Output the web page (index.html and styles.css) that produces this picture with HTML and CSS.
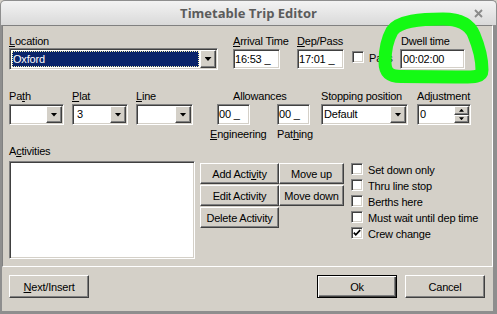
FILE: index.html
```html
<!DOCTYPE html>
<html lang="en">
<head>
    <meta charset="UTF-8">
    <meta name="viewport" content="width=device-width, initial-scale=1.0">
    <title>Timetable Trip Editor</title>
    <link rel="stylesheet" href="styles.css">
</head>
<body>
<div class="window">
    <!-- Title bar -->
    <div class="titlebar">
        <span></span>
        <span class="title">Timetable Trip Editor</span>
        <span class="wm-buttons">
            <svg width="8" height="9" viewBox="0 0 8 9"><path d="M0.5 6.5h7" stroke="#8a8a8a" stroke-width="2"/></svg>
            <svg width="9" height="9" viewBox="0 0 9 9"><path d="M1 1l7 7M8 1l-7 7" stroke="#8a8a8a" stroke-width="1.9"/></svg>
        </span>
    </div>

    <div class="client">
        <div class="panel">
            <!-- Location and times -->
            <div class="row row-1">
                <div class="group g-location">
                    <label><u>L</u>ocation</label>
                    <div class="combo sunken c-location">
                        <div class="combo-text"><span class="selected">Oxford</span></div>
                        <div class="combo-btn raised"><span class="arrow-down"></span></div>
                    </div>
                </div>
                <div class="group g-arrival">
                    <label><u>A</u>rrival Time</label>
                    <div class="edit sunken e-time">16:53 _</div>
                </div>
                <div class="group g-dep">
                    <label><u>D</u>ep/Pass</label>
                    <div class="edit sunken e-time">17:01 _</div>
                </div>
                <div class="group g-pass">
                    <span class="cb sunken"></span>
                    <span class="cb-label">Pass</span>
                </div>
                <div class="group g-dwell">
                    <label>Dwell time</label>
                    <div class="edit sunken e-dwell">00:02:00</div>
                </div>
            </div>

            <!-- Path, platform, allowances -->
            <div class="row row-2">
                <div class="group g-path">
                    <label>Pa<u>t</u>h</label>
                    <div class="combo sunken c-small c-path">
                        <div class="combo-text"></div>
                        <div class="combo-btn raised"><span class="arrow-down"></span></div>
                    </div>
                </div>
                <div class="group g-plat">
                    <label><u>P</u>lat</label>
                    <div class="combo sunken c-small c-plat">
                        <div class="combo-text">3</div>
                        <div class="combo-btn raised"><span class="arrow-down"></span></div>
                    </div>
                </div>
                <div class="group g-line">
                    <label><u>L</u>ine</label>
                    <div class="combo sunken c-small c-line">
                        <div class="combo-text"></div>
                        <div class="combo-btn raised"><span class="arrow-down"></span></div>
                    </div>
                </div>
                <div class="group g-allow">
                    <label class="allow-title">Allowances</label>
                    <div class="allow-inputs">
                        <div class="edit sunken e-allow">00 _</div>
                        <div class="edit sunken e-allow">00 _</div>
                    </div>
                    <div class="allow-labels">
                        <span class="sub-eng"><u>E</u>ngineering</span>
                        <span>Pat<u>h</u>ing</span>
                    </div>
                </div>
                <div class="group g-stop">
                    <label>Stopping position</label>
                    <div class="combo sunken c-small c-stop">
                        <div class="combo-text">Default</div>
                        <div class="combo-btn raised"><span class="arrow-down"></span></div>
                    </div>
                </div>
                <div class="group g-adj">
                    <label>Adjustment</label>
                    <div class="spin sunken">
                        <div class="spin-text">0</div>
                        <div class="spin-btns">
                            <div class="raised"><span class="arrow-up"></span></div>
                            <div class="raised"><span class="arrow-down small"></span></div>
                        </div>
                    </div>
                </div>
            </div>

            <!-- Activities -->
            <div class="row row-3">
                <div class="group g-activities">
                    <label>A<u>c</u>tivities</label>
                    <div class="listbox sunken"></div>
                </div>
                <div class="act-buttons">
                    <div class="btn raised">Add Acti<u>v</u>ity</div>
                    <div class="btn raised">Move up</div>
                    <div class="btn raised">Edit Activity</div>
                    <div class="btn raised">Move down</div>
                    <div class="btn raised">Delete Activity</div>
                </div>
                <div class="checks">
                    <div class="check"><span class="cb sunken"></span><span class="cb-label">Set down only</span></div>
                    <div class="check"><span class="cb sunken"></span><span class="cb-label">Thru line stop</span></div>
                    <div class="check"><span class="cb sunken"></span><span class="cb-label">Berths here</span></div>
                    <div class="check"><span class="cb sunken"></span><span class="cb-label">Must wait until dep time</span></div>
                    <div class="check">
                        <span class="cb sunken"><svg width="8" height="8" viewBox="0 0 8 8"><path d="M0.8 3.6l2 2.2 4.4-4.6" fill="none" stroke="#000" stroke-width="1.7"/></svg></span>
                        <span class="cb-label">Crew change</span>
                    </div>
                </div>
            </div>
        </div>

        <!-- Dialog buttons -->
        <div class="footer">
            <div class="btn raised"><span><u>N</u>ext/Insert</span></div>
            <div class="btn btn-default">Ok</div>
            <div class="btn raised">Cancel</div>
        </div>
    </div>

    <!-- Hand-drawn highlight over the dwell time -->
    <svg class="scribble" width="497" height="314" viewBox="0 0 497 314">
        <path d="M392 31C399 21 421 19 443 19C461 19 470 25 474 35C479 47 482 61 482 70C482 78 472 77 456 77L401 76.5C389 76.5 385 72 385 62C385 50 387 40 392 31Z"
              fill="none" stroke="#14fa14" stroke-width="13" stroke-linejoin="round"/>
    </svg>
</div>
</body>
</html>
```

FILE: styles.css
```css
* {
    box-sizing: border-box;
}

body {
    margin: 0;
    background: #fff;
    font-family: "Liberation Sans", Arial, sans-serif;
    font-size: 11px;
    line-height: 13px;
    letter-spacing: -0.2px;
    color: #000;
}

.window {
    position: relative;
    width: 497px;
    height: 314px;
    display: flex;
    flex-direction: column;
    background: #d4d0c8;
}

/* Title bar */
.titlebar {
    height: 25px;
    display: grid;
    grid-template-columns: 1fr auto 1fr;
    align-items: center;
    background: linear-gradient(#f3f3f3, #d9d9d9);
    border: 1px solid #8e8e8e;
    border-bottom: none;
    border-radius: 5px 5px 0 0;
}

.title {
    font-family: "Open Sans", sans-serif;
    font-weight: 700;
    font-size: 13px;
    letter-spacing: 0;
    color: #5b5b5b;
}

.wm-buttons {
    justify-self: end;
    display: flex;
    align-items: center;
    gap: 15px;
    padding-right: 13px;
}

.wm-buttons svg {
    display: block;
}

/* Client area */
.client {
    flex: 1;
    display: flex;
    flex-direction: column;
    border-left: 2px solid #8e8e8e;
    border-right: 4px solid #8e8e8e;
    border-bottom: 3px solid #8e8e8e;
}

.panel {
    height: 242px;
    border: 1px solid;
    border-color: #808080 #fff #fff #808080;
    padding: 9px 0 0 6px;
}

/* 3D borders */
.sunken {
    background: #fff;
    border: 1px solid;
    border-color: #808080 #fff #fff #808080;
    box-shadow: inset 1px 1px 0 #404040, inset -1px -1px 0 #d4d0c8;
    padding: 1px;
}

.raised {
    background: #d4d0c8;
    border: 1px solid;
    border-color: #fff #404040 #404040 #fff;
    box-shadow: inset -1px -1px 0 #808080;
}

/* Layout rows */
.row {
    display: flex;
    align-items: flex-start;
}

.group {
    display: flex;
    flex-direction: column;
    flex-shrink: 0;
}

.group label {
    display: block;
    height: 13px;
    white-space: nowrap;
}

.row-2 {
    margin-top: 20px;
}

.row-3 {
    margin-top: 4px;
}

/* Row 1 */
.g-location { width: 224px; }
.g-arrival { width: 64px; }
.g-dep { width: 55px; }
.g-dwell label { padding-left: 1px; }

.g-pass {
    width: 48px;
    flex-direction: row;
    padding-top: 16px;
}

/* Combo boxes */
.combo {
    display: flex;
    height: 22px;
}

.combo-text {
    flex: 1;
    padding-left: 2px;
    line-height: 17px;
    white-space: nowrap;
    overflow: hidden;
}

.combo-btn {
    width: 16px;
    display: flex;
    align-items: center;
    justify-content: center;
}

.c-location { width: 209px; }

.c-location .combo-text {
    padding-left: 0;
    line-height: 16px;
}

.selected {
    display: block;
    margin: 1px 1px 1px 1px;
    padding-left: 1px;
    background: #0a246a;
    color: #fff;
    outline: 1px dotted #f4f0b0;
    outline-offset: -1px;
}

.c-small {
    height: 21px;
    margin-top: 1px;
}

.c-path { width: 55px; }
.c-plat { width: 56px; }
.c-plat .combo-text { padding-left: 3px; }
.c-line { width: 57px; }
.c-stop { width: 87px; }
.c-stop .combo-text { padding-left: 1px; }

.arrow-down {
    width: 7px;
    height: 4px;
    background: #000;
    clip-path: polygon(0 0, 100% 0, 50% 100%);
}

.arrow-down.small,
.arrow-up {
    width: 5px;
    height: 3px;
}

.arrow-up {
    background: #000;
    clip-path: polygon(50% 0, 100% 100%, 0 100%);
}

/* Edit fields */
.edit {
    height: 20px;
    margin-top: 1px;
    line-height: 16px;
    white-space: nowrap;
}

.e-time { width: 47px; }

.e-dwell {
    width: 65px;
    padding-left: 2px;
}

/* Row 2 */
.g-path { width: 63px; }
.g-plat { width: 64px; }
.g-line { width: 81px; }
.g-allow { width: 104px; }
.g-stop { width: 96px; }

.allow-title {
    padding-left: 16px;
}

.allow-inputs {
    display: flex;
    gap: 27px;
    margin-top: 1px;
}

.e-allow {
    width: 33px;
    height: 21px;
    margin-top: 0;
    line-height: 17px;
}

.allow-labels {
    display: flex;
    margin-top: 3px;
    white-space: nowrap;
}

.sub-eng {
    margin-left: -7px;
    width: 67px;
}

.spin {
    display: flex;
    width: 54px;
    height: 21px;
    margin-top: 1px;
}

.spin-text {
    flex: 1;
    line-height: 17px;
    padding-left: 1px;
}

.spin-btns {
    width: 15px;
    display: flex;
    flex-direction: column;
}

.spin-btns .raised {
    flex: 1;
    display: flex;
    align-items: center;
    justify-content: center;
}

/* Row 3 */
.g-activities { width: 191px; }

.listbox {
    width: 186px;
    height: 98px;
    margin-top: 3px;
}

.act-buttons {
    display: grid;
    grid-template-columns: 79px 65px;
    grid-auto-rows: 21px;
    row-gap: 1px;
    margin-top: 18px;
}

.checks {
    margin-top: 18px;
    margin-left: 7px;
}

.check {
    display: flex;
    height: 16px;
}

.cb {
    width: 12px;
    height: 12px;
    flex-shrink: 0;
    display: flex;
}

.cb svg {
    display: block;
}

.cb-label {
    margin-left: 5px;
    margin-top: 1px;
    white-space: nowrap;
}

/* Buttons */
.btn {
    height: 21px;
    padding-top: 2px;
    display: flex;
    align-items: center;
    justify-content: center;
    white-space: nowrap;
}

.footer {
    flex: 1;
    display: flex;
    align-items: flex-start;
    padding: 8px 8px 0 7px;
}

.footer .btn {
    width: 80px;
    height: 23px;
}

.btn-default {
    margin-left: auto;
    margin-right: 8px;
    background: #d4d0c8;
    border: 1px solid #000;
    box-shadow: inset 1px 1px 0 #fff, inset -1px -1px 0 #404040, inset -2px -2px 0 #808080;
}

/* Highlight scribble */
.scribble {
    position: absolute;
    top: 0;
    left: 0;
    pointer-events: none;
}
```
